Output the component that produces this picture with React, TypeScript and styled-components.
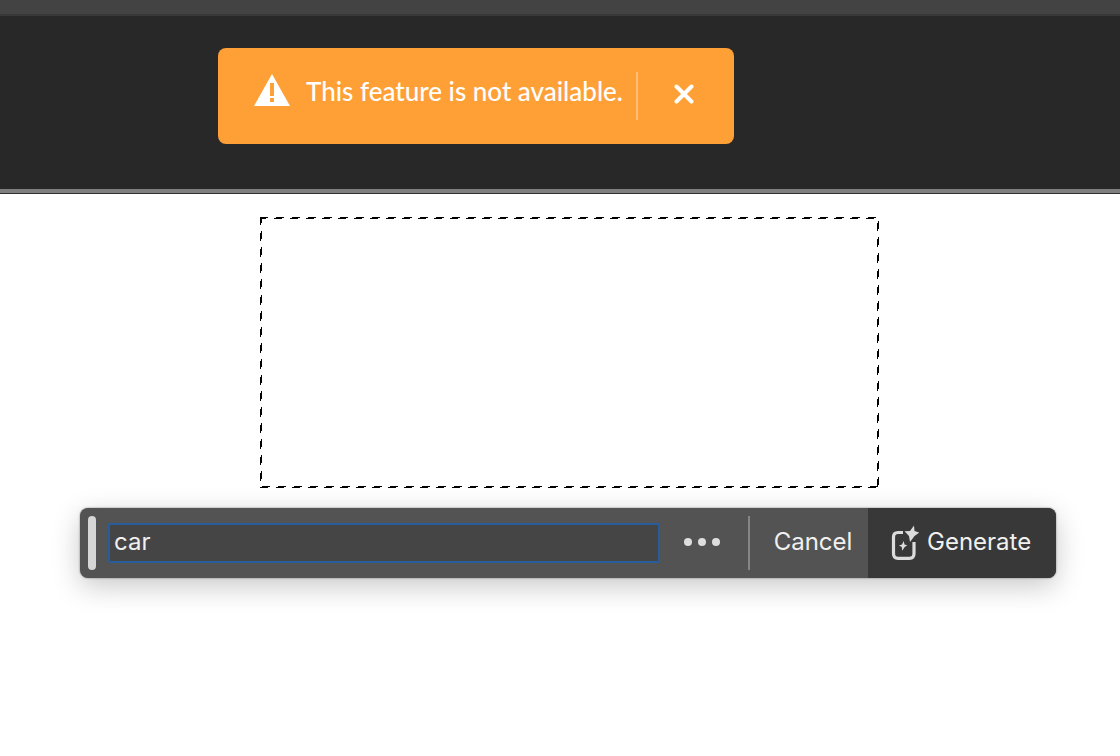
import React, { useState } from "react";
import styled, { createGlobalStyle } from "styled-components";

const GlobalStyle = createGlobalStyle`
  * { box-sizing: border-box; }
  body { margin: 0; background: #fff; font-family: Inter, "Liberation Sans", sans-serif; }
  button, input { font: inherit; border: 0; padding: 0; }
  button { background: none; cursor: pointer; }
`;

const Page = styled.div`
  min-height: 100vh;
  background: #fff;
`;

const Chrome = styled.header`
  min-height: 193px;
  padding: 34px 16px 0 218px;
  background: #282828;
  border-top: 14px solid #434343;
  border-bottom: 4px solid #7f7f7f;
  box-shadow: inset 0 2px #383838, 0 1px #303030;
`;

const Toast = styled.div`
  display: flex;
  align-items: flex-start;
  width: 516px;
  max-width: 100%;
  height: 96px;
  padding: 24px 0 24px 36px;
  border-radius: 8px;
  background: #ffa037;
  color: #fff;
`;

const WarningIcon = styled.svg`
  flex: none;
  width: 36px;
  height: 36px;
`;

const Message = styled.p`
  flex: 1;
  margin: 0 0 0 16px;
  font: 500 26px/38px Lato, "Open Sans", sans-serif;
  white-space: nowrap;
`;

const CloseButton = styled.button`
  display: grid;
  place-items: center;
  width: 98px;
  height: 48px;
  padding: 0 4px 4px 0;
  border-left: 2px solid #ffbd75;
  color: #fff;
`;

const Canvas = styled.main`
  padding: 24px 64px 64px 80px;
`;

const Marquee = styled.svg`
  display: block;
  margin-left: 180px;
`;

const TaskBar = styled.form`
  display: flex;
  align-items: center;
  height: 70px;
  margin-top: 20px;
  padding-left: 8px;
  border-radius: 8px;
  overflow: hidden;
  background: #535353;
  box-shadow: 0 0 2px rgba(0, 0, 0, 0.5), 0 8px 28px rgba(0, 0, 0, 0.22);
  color: #f0f0f0;
  font-size: 24px;
`;

const Grip = styled.span`
  width: 8px;
  height: 54px;
  border-radius: 4px;
  background: #d6d6d6;
`;

const Prompt = styled.input`
  flex: 1;
  min-width: 0;
  height: 40px;
  margin-left: 12px;
  padding: 0 4px 4px;
  border: 2px solid #275d9c;
  border-radius: 2px;
  outline: none;
  background: #454545;
  color: #f0f0f0;
`;

const MoreButton = styled.button`
  display: grid;
  place-items: center;
  width: 88px;
  height: 54px;
  padding: 0 4px 2px 0;
  color: #dedede;
`;

const CancelButton = styled.button`
  width: 120px;
  height: 54px;
  padding: 0 8px 4px 16px;
  border-left: 2px solid #858585;
  color: inherit;
`;

const GenerateButton = styled.button`
  display: flex;
  align-items: center;
  gap: 8px;
  width: 188px;
  height: 70px;
  padding: 0 0 4px 23px;
  background: #383838;
  color: inherit;
`;

type Side = { d: string; offset: number };

const W = 619;
const H = 271;
const sides: Side[] = [
  { d: `M0 0.5H${W}`, offset: 0 },
  { d: `M0 1.5H${W}`, offset: 2 },
  { d: `M0.5 0V${H}`, offset: 0 },
  { d: `M1.5 0V${H}`, offset: 2 },
  { d: `M0 ${H - 1.5}H${W}`, offset: 14 },
  { d: `M0 ${H - 0.5}H${W}`, offset: 0 },
  { d: `M${W - 1.5} 0V${H}`, offset: 10 },
  { d: `M${W - 0.5} 0V${H}`, offset: 12 },
];

export default function App() {
  const [prompt, setPrompt] = useState("car");
  const [toastOpen, setToastOpen] = useState(true);

  return (
    <Page>
      <GlobalStyle />
      <Chrome>
        {toastOpen && (
          <Toast role="alert">
            <WarningIcon viewBox="0 0 36 36" aria-hidden="true">
              <path fill="#fff" fillRule="evenodd" d="M18 2 36 34H0ZM16 11V24H20V11ZM16 26V30H20V26Z" />
            </WarningIcon>
            <Message>This feature is not available.</Message>
            <CloseButton type="button" aria-label="Close" onClick={() => setToastOpen(false)}>
              <svg width="20" height="20" viewBox="0 0 20 20" aria-hidden="true">
                <path d="M2.5 2.5 17.5 17.5M17.5 2.5 2.5 17.5" stroke="currentColor" strokeWidth="4" strokeLinecap="round" />
              </svg>
            </CloseButton>
          </Toast>
        )}
      </Chrome>
      <Canvas>
        <Marquee width={W} height={H} viewBox={`0 0 ${W} ${H}`} shapeRendering="crispEdges" aria-hidden="true">
          {sides.map(({ d, offset }) => (
            <path key={d} d={d} stroke="#000" strokeDasharray="8 8" strokeDashoffset={offset} />
          ))}
        </Marquee>
        <TaskBar onSubmit={(e) => e.preventDefault()}>
          <Grip />
          <Prompt aria-label="Prompt" value={prompt} onChange={(e) => setPrompt(e.target.value)} />
          <MoreButton type="button" aria-label="More options">
            <svg width="36" height="8" viewBox="0 0 36 8" fill="currentColor" aria-hidden="true">
              <circle cx="4" cy="4" r="4" />
              <circle cx="18" cy="4" r="4" />
              <circle cx="32" cy="4" r="4" />
            </svg>
          </MoreButton>
          <CancelButton type="button">Cancel</CancelButton>
          <GenerateButton type="submit">
            <svg width="28" height="40" viewBox="0 0 28 40" fill="none" aria-hidden="true">
              <path d="M12 11.5H7Q2.5 11.5 2.5 16V32.5Q2.5 37.3 7 37.3H18.5Q23 37.3 23 32.5V21" stroke="#dcdcdc" strokeWidth="3.2" />
              <path d="M23 4.5 23.5 10 28.3 11.5 23.5 15 19 21 18 15 13.5 10.3 19 10Z" fill="#dcdcdc" />
              <path d="M12.7 20 13.5 23.5 16.3 24.2 13.7 26 11.2 29.8 10.8 26 8 24.5 11 23.6Z" fill="#dcdcdc" />
            </svg>
            Generate
          </GenerateButton>
        </TaskBar>
      </Canvas>
    </Page>
  );
}
